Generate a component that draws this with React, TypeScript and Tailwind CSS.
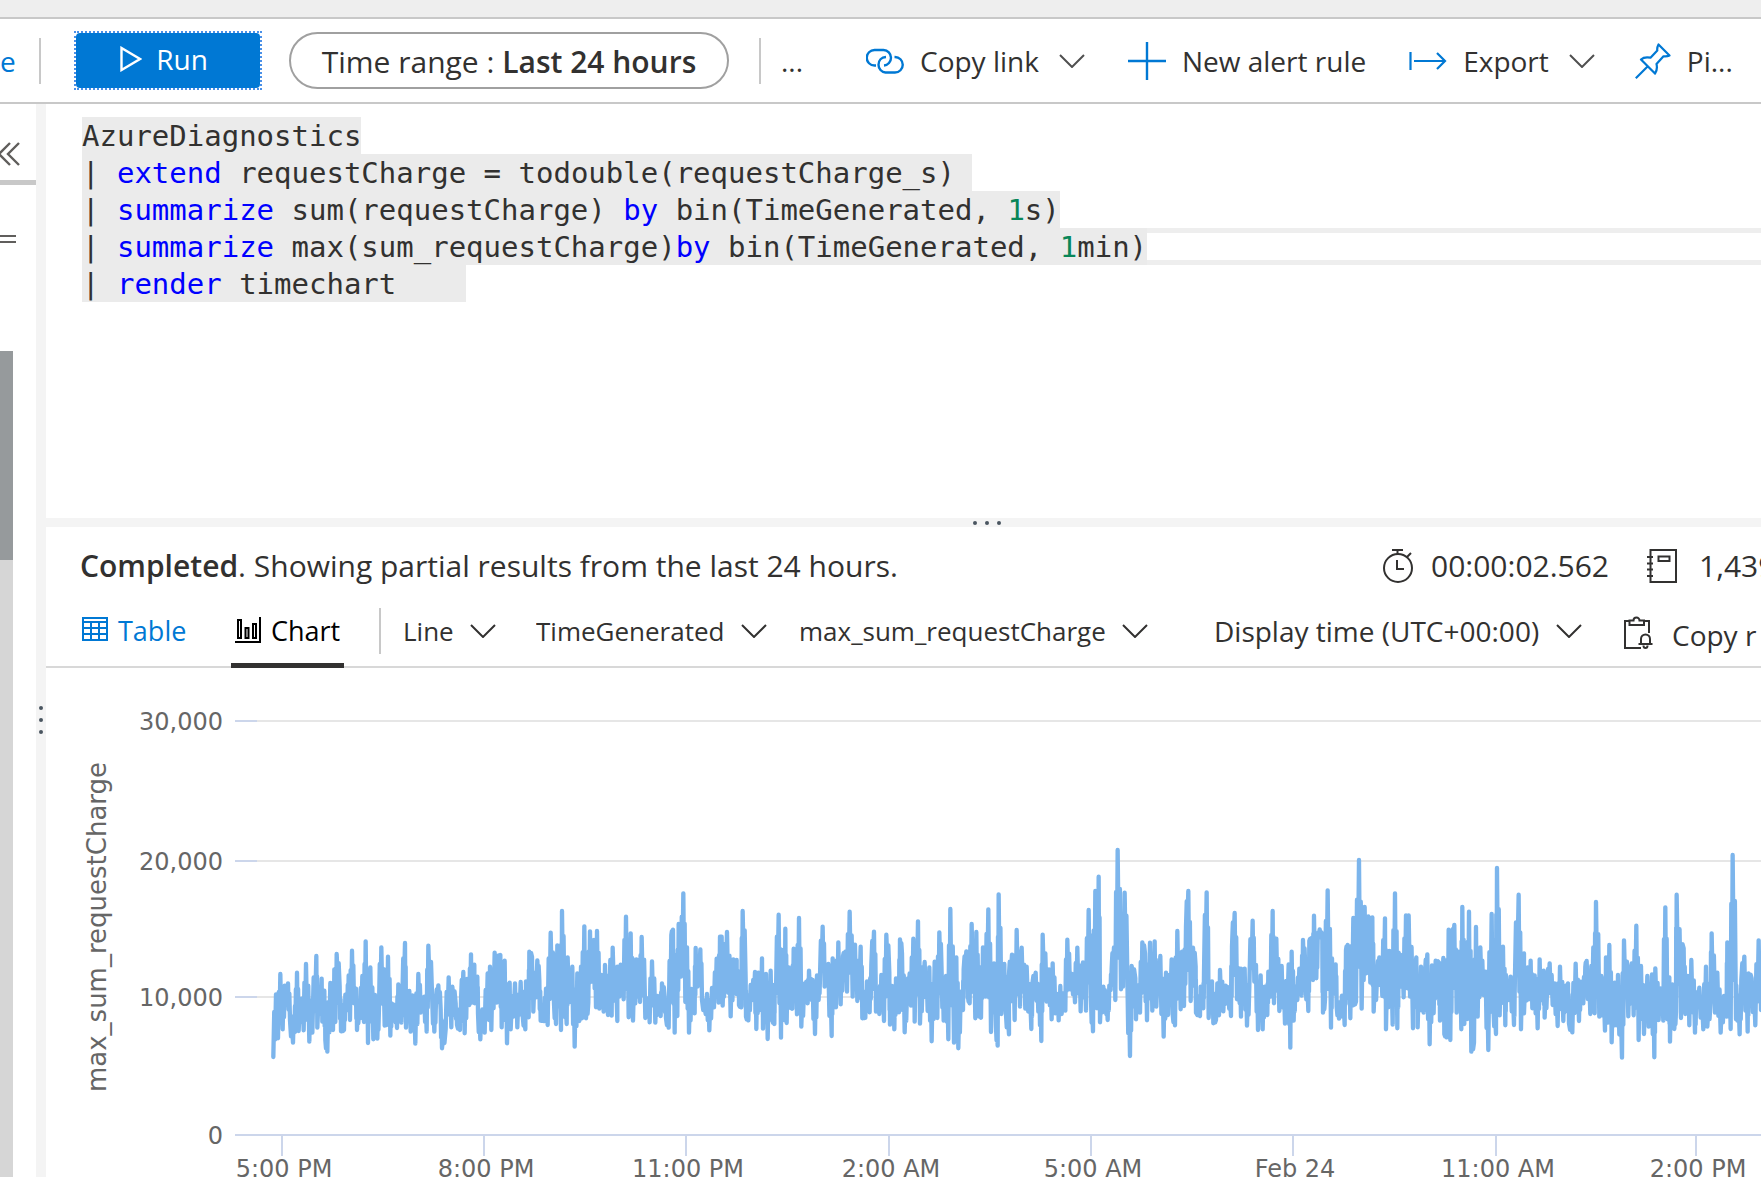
import type { ReactNode } from 'react';

const ChevronDown = ({ className = '' }: { className?: string }) => (
	<svg
		viewBox="0 0 26 14"
		className={`h-3.5 w-[26px] shrink-0 ${className}`}
		fill="none"
		stroke="currentColor"
		strokeWidth="2">
		<path d="M1 1l12 12L25 1" />
	</svg>
);

const LinkIcon = () => (
	<svg
		viewBox="0 0 38 28"
		className="h-7 w-[38px] shrink-0 text-[#0078d4]"
		fill="none"
		stroke="currentColor"
		strokeWidth="2.4">
		<path d="M10 18.500H8.500a7.750 7.750 0 0 1 0-15.500H17.500a7.750 7.750 0 0 1 7.500 7.750c0 4-3 7.500-7 7.750" />
		<path d="M28.500 10H29a7.750 7.750 0 0 1 0 15.500h-9.500a7.750 7.750 0 0 1-7-7.750c0-4.200 3-7.500 7.500-7.750" />
	</svg>
);

const PlusIcon = () => (
	<svg
		viewBox="0 0 38 38"
		className="size-[38px] shrink-0 text-[#0078d4]"
		fill="none"
		stroke="currentColor"
		strokeWidth="2.4">
		<path d="M19 0v38M0 19h38" />
	</svg>
);

const ExportIcon = () => (
	<svg
		viewBox="0 0 38 18"
		className="h-[18px] w-[38px] shrink-0 text-[#0078d4]"
		fill="none"
		stroke="currentColor"
		strokeWidth="2.2">
		<path d="M1.500 0v18M5 9h31M28 1l8 8-8 8" />
	</svg>
);

const PinIcon = () => (
	<svg
		viewBox="0 0 36 36"
		className="size-9 shrink-0 text-[#0078d4]"
		fill="none"
		stroke="currentColor"
		strokeWidth="2.200"
		strokeLinejoin="round">
		<path d="M23.500 1.500l11 11c-2 1-4.300 1-6 .8l-7 7.700c.8 3.500.5 6.700-1.500 9.500L6 16.500c2.500-2.300 5.800-2.600 9.500-1.800l6.800-7.200c-.3-2 .1-4 1.200-6zM12.800 23.200L.8 35.200" />
	</svg>
);

const PlayIcon = () => (
	<svg
		viewBox="0 0 22 26"
		className="h-[26px] w-[22px]"
		fill="none"
		stroke="currentColor"
		strokeWidth="2.400">
		<path d="M1.500 2v22L20 13z" />
	</svg>
);

const CollapseIcon = () => (
	<svg
		viewBox="0 0 20 24"
		className="h-6 w-5"
		fill="none"
		stroke="currentColor"
		strokeWidth="2.400">
		<path d="M10 1L-1 12l11 11M19 1L8 12l11 11" />
	</svg>
);

const StopwatchIcon = () => (
	<svg
		viewBox="0 0 30 34"
		className="h-[34px] w-[30px] shrink-0"
		fill="none"
		stroke="currentColor"
		strokeWidth="2">
		<circle cx="15" cy="19" r="14" />
		<path d="M9 1h11M14.500 1v4M14 11v9h7M24 8l4-4" />
	</svg>
);

const NotebookIcon = () => (
	<svg
		viewBox="0 0 30 34"
		className="h-[34px] w-[30px] shrink-0"
		fill="none"
		stroke="currentColor"
		strokeWidth="2">
		<path d="M3.500 1H29v32H3.500zM0 8h6M0 14.500h6M0 20.500h6M0 27h6M11.500 7.500h11v4.500h-11z" />
	</svg>
);

const TableIcon = () => (
	<svg
		viewBox="0 0 26 24"
		className="mb-1 h-6 w-[26px]"
		fill="none"
		stroke="currentColor"
		strokeWidth="2">
		<path d="M1 1h24v22H1zM1 5h24M1 11h24M1 17h24M9 5v18M17 5v18" />
	</svg>
);

const ChartIcon = () => (
	<svg
		viewBox="0 0 26 26"
		className="mb-1 size-[26px]"
		fill="none"
		stroke="currentColor"
		strokeWidth="2">
		<path d="M0 25h26M3 3h3v18H3zM10.500 11h3v10h-3zM18 7h3v14h-3zM25 0v25" />
	</svg>
);

const ClipboardIcon = () => (
	<svg
		viewBox="0 0 30 34"
		className="mb-1 h-[34px] w-[30px] shrink-0"
		fill="none"
		stroke="currentColor"
		strokeWidth="2">
		<path d="M5 5H1v27h16M20 5h5v12M5.500 9V4.500H9.500a3 3 0 0 1 6 0h4.500V9z" />
		<path d="M14.500 28h14M17 28v-5a4.500 4.500 0 0 1 9 0v5M19.500 29.500a2 2.500 0 0 0 4 0" />
	</svg>
);

const Separator = () => <div className="h-[46px] w-0.5 shrink-0 bg-[#c8c8c8]" />;

const ToolbarButton = ({
	icon,
	label,
	menu,
	className = ''
}: {
	icon?: ReactNode;
	label: string;
	menu?: boolean;
	className?: string;
}) => (
	<button className={`flex shrink-0 items-center gap-4 ${className}`}>
		{icon}
		<span className="whitespace-nowrap">{label}</span>
		{menu && <ChevronDown className="ml-1 text-[#505050]" />}
	</button>
);

const Toolbar = () => (
	<header className="flex h-[85px] shrink-0 items-center overflow-hidden border-b-2 border-[#c8c8c8] bg-white text-[28px]">
		<a href="#scope" className="w-[13px] shrink-0 text-[#0078d4]">
			e
		</a>
		<div className="w-[26px] shrink-0" />
		<Separator />
		<button className="ml-[33px] h-[59px] w-[188px] shrink-0 border-2 border-dotted border-[#4a90e8]">
			<span className="flex h-full items-center justify-center gap-3.5 rounded bg-[#0078d4] pr-2 pb-1 text-white">
				<PlayIcon />
				Run
			</span>
		</button>
		<button className="ml-[27px] h-[57px] w-[440px] shrink-0 rounded-full border-2 border-[#a0a0a0] pt-0.5 text-[30px] whitespace-nowrap">
			Time range : <span className="font-semibold">Last 24 hours</span>
		</button>
		<div className="w-[30px] shrink-0" />
		<Separator />
		<button className="ml-5 w-[85px] shrink-0 text-left">...</button>
		<ToolbarButton icon={<LinkIcon />} label="Copy link" menu />
		<ToolbarButton icon={<PlusIcon />} label="New alert rule" className="ml-[43px]" />
		<ToolbarButton icon={<ExportIcon />} label="Export" menu className="ml-[43px]" />
		<ToolbarButton icon={<PinIcon />} label="Pi..." className="ml-10" />
	</header>
);

const Sidebar = () => (
	<aside className="w-9 shrink-0 bg-white">
		<div className="flex h-[81px] items-start border-b-[5px] border-[#c8c8c8] pt-[38px] text-[#605e5c]">
			<button aria-label="Collapse">
				<CollapseIcon />
			</button>
		</div>
		<div className="mt-[50px] h-2 w-4 border-y-2 border-[#605e5c]" />
		<div className="mt-[108px] h-[826px] w-[13px] bg-[#d6d6d6]">
			<div className="h-[209px] bg-[#969a9c]" />
		</div>
	</aside>
);

const Dots = ({ vertical }: { vertical?: boolean }) => (
	<div className={`flex ${vertical ? 'flex-col gap-2' : 'gap-2'}`}>
		<i className="size-1 rounded-full bg-[#4a5560]" />
		<i className="size-1 rounded-full bg-[#4a5560]" />
		<i className="size-1 rounded-full bg-[#4a5560]" />
	</div>
);

const Keyword = ({ children }: { children: ReactNode }) => (
	<span className="text-[#0000ff]">{children}</span>
);

const Num = ({ children }: { children: ReactNode }) => (
	<span className="text-[#098658]">{children}</span>
);

const CodeLine = ({ children, active }: { children: ReactNode; active?: boolean }) => (
	<div className="flex h-[37px]">
		<span className="shrink-0 bg-[#ebebeb]">{children}</span>
		{active && <span className="grow border-y-[5px] border-[#eeeeee]" />}
	</div>
);

const Editor = () => (
	<section className="h-[414px] shrink-0 overflow-hidden bg-white pt-[13px] pl-9 font-['DejaVu_Sans_Mono',monospace] text-[29px] leading-[38px] whitespace-pre">
		<CodeLine>AzureDiagnostics</CodeLine>
		<CodeLine>
			{'| '}
			<Keyword>extend</Keyword>
			{' requestCharge = todouble(requestCharge_s) '}
		</CodeLine>
		<CodeLine>
			{'| '}
			<Keyword>summarize</Keyword>
			{' sum(requestCharge) '}
			<Keyword>by</Keyword>
			{' bin(TimeGenerated, '}
			<Num>1</Num>s)
		</CodeLine>
		<CodeLine active>
			{'| '}
			<Keyword>summarize</Keyword>
			{' max(sum_requestCharge)'}
			<Keyword>by</Keyword>
			{' bin(TimeGenerated, '}
			<Num>1</Num>min)
		</CodeLine>
		<CodeLine>
			{'| '}
			<Keyword>render</Keyword>
			{' timechart    '}
		</CodeLine>
	</section>
);

const Dropdown = ({
	label,
	value,
	className = ''
}: {
	label: string;
	value: string;
	className?: string;
}) => (
	<label className={`flex shrink-0 items-center gap-4 ${className}`}>
		<select aria-label={label} className="appearance-none bg-transparent">
			<option>{value}</option>
		</select>
		<ChevronDown />
	</label>
);

const ResultsBar = () => (
	<>
		<div className="flex h-[77px] shrink-0 items-center pl-[34px] text-[30px] whitespace-nowrap">
			<p className="w-[1303px] shrink-0">
				<span className="font-semibold">Completed</span>. Showing partial results from the
				last 24 hours.
			</p>
			<div className="flex w-[264px] shrink-0 items-center gap-[18px]">
				<StopwatchIcon />
				00:00:02.562
			</div>
			<div className="flex items-center gap-[22px]">
				<NotebookIcon />
				1,439
			</div>
		</div>
		<div className="flex h-16 shrink-0 items-center border-b-2 border-[#d8d8d8] pb-2 pl-9 text-[27px] whitespace-nowrap">
			<button className="flex w-[149px] shrink-0 items-center gap-2.5 text-[#0078d4]">
				<TableIcon />
				Table
			</button>
			<button className="flex h-16 w-[113px] shrink-0 items-center justify-center gap-2.5 self-start border-b-[5px] border-[#323130] pb-1 text-black">
				<ChartIcon />
				Chart
			</button>
			<div className="w-[35px] shrink-0" />
			<Separator />
			<Dropdown label="Chart type" value="Line" className="ml-[22px] text-[26px]" />
			<Dropdown label="X axis" value="TimeGenerated" className="ml-10 text-[26px]" />
			<Dropdown label="Y axis" value="max_sum_requestCharge" className="ml-8 text-[26px]" />
			<Dropdown
				label="Time zone"
				value="Display time (UTC+00:00)"
				className="ml-[66px] text-[28px]"
			/>
			<button className="mt-2 ml-[42px] flex shrink-0 items-center gap-[18px] text-[28px]">
				<ClipboardIcon />
				Copy r
			</button>
		</div>
	</>
);

const yTicks = [
	{ y: 53, label: '30,000' },
	{ y: 193, label: '20,000' },
	{ y: 329, label: '10,000' },
	{ y: 467, label: '0' }
];

const xTicks = [
	{ x: 236, label: '5:00 PM' },
	{ x: 438, label: '8:00 PM' },
	{ x: 640, label: '11:00 PM' },
	{ x: 843, label: '2:00 AM' },
	{ x: 1045, label: '5:00 AM' },
	{ x: 1247, label: 'Feb 24' },
	{ x: 1450, label: '11:00 AM' },
	{ x: 1650, label: '2:00 PM' }
];

// samples on a grid of three units per pixel, one string per third of the day
const evening =
	'220,651 228,463 234,595 241,402 248,568 254,437 258,490 264,430 270,540 279,608 285,498 286,575 291,398 296,573 305,476 311,571 318,372 328,605 333,482 337,578 349,348 352,563 365,416 367,545 373,452 376,600 382,635 391,429 399,570 403,388 406,546 410,342 419,440 423,574 432,570 436,464 442,510 446,406 450,540 456,332 462,490 468,446 471,570 477,498 480,535 487,408 492,546 497,304 504,609 511,382 520,598 525,465 532,596 537,500 544,322 554,557 556,390 560,555 564,350 571,587 575,490 585,505 591,564 595,433 604,548 607,475 615,309 618,563 628,453 632,575 637,466 646,611 655,402 662,518 667,478 673,470 680,575 685,317 697,490 703,575 708,480 715,436 722,508 726,625 737,568 746,412 754,562 757,440 767,490 771,555 780,570 783,480 790,396 794,580 801,417 808,495 813,343 816,488 823,374 824,490 832,410 834,520 841,598 847,508 854,578 863,400 867,540 870,380 874,570 884,338 890,488 893,350 901,345 905,562 914,362 921,610 929,428 932,568 945,430 952,562 962,426 968,527 976,568 978,424 986,532 988,335 996,350 1000,515 1012,361 1018,420 1022,542 1033,543 1038,446 1043,555 1052,278 1062,490 1068,552 1072,316 1083,570 1086,213 1093,480 1100,552 1103,352 1110,486 1117,380 1124,620 1132,400 1138,543 1143,380 1146,535 1153,259 1158,535 1165,488 1170,274 1175,425 1182,300 1188,502 1191,273 1198,506 1204,405 1211,515 1215,375 1224,525 1231,360 1235,527 1238,323 1252,543 1252,380 1258,470 1262,374 1271,478 1278,230 1286,532 1292,280 1299,542 1309,358 1313,470 1316,360 1320,486 1325,291 1336,534 1343,475 1349,547 1356,364 1366,548 1372,468 1382,528 1386,430 1394,470 1398,535 1406,563 1414,285 1419,269 1424,578 1427,345 1432,528 1436,252 1443,410 1450,160 1456,486 1461,322 1467,578 1474,447 1484,520 1487,324 1492,440 1501,328 1506,480 1517,522 1521,462 1528,571 1536,444 1542,502 1550,356 1556,488 1560,290';

const night =
	'5,290 8,497 14,400 21,276 32,529 40,358 44,425 50,360 50,462 57,395 57,495 64,502 68,213 77,420 78,530 85,541 92,435 97,480 105,396 109,567 115,398 120,510 126,355 129,566 138,402 143,597 152,392 157,540 163,552 164,435 168,460 176,224 183,593 186,330 192,540 196,266 200,549 206,382 210,500 217,506 221,326 231,523 237,234 244,560 252,445 259,425 263,490 267,392 275,480 278,420 285,582 291,406 296,480 300,410 308,260 314,440 325,372 335,588 338,355 348,502 355,307 362,493 369,348 376,335 381,455 389,215 398,470 405,314 412,483 422,320 427,535 436,533 441,424 449,517 454,375 462,275 468,515 475,460 478,522 484,405 492,543 499,284 508,398 510,554 516,438 523,568 528,415 537,517 540,298 546,340 554,577 561,455 569,400 573,497 580,296 584,545 594,244 600,551 608,420 614,366 623,513 628,382 635,604 644,365 652,534 658,277 665,400 671,542 678,408 685,598 691,207 702,608 709,352 715,625 722,455 729,510 731,388 739,334 744,470 749,490 755,252 766,535 769,276 775,520 783,533 789,322 797,470 805,208 813,576 822,370 828,560 833,617 836,163 844,522 853,372 857,508 867,583 866,420 876,344 884,540 890,270 900,500 905,323 916,506 920,380 934,567 937,432 947,398 955,515 958,435 964,603 968,284 980,485 987,388 995,538 998,370 1006,520 1011,462 1016,541 1021,438 1025,522 1029,460 1036,512 1042,299 1050,448 1056,402 1065,487 1072,323 1082,514 1089,367 1098,512 1106,210 1113,480 1119,574 1126,153 1131,505 1136,110 1140,547 1150,440 1157,478 1163,540 1168,437 1172,450 1175,385 1182,322 1186,480 1193,30 1203,448 1204,240 1209,440 1214,158 1222,405 1230,648 1235,378 1246,415 1248,538 1254,436 1260,518 1267,307 1275,340 1281,541 1290,308 1297,512 1304,304 1309,500 1321,348 1331,590 1338,398 1344,525 1355,358 1358,522 1365,556 1372,273 1382,508 1386,335 1392,498 1398,262 1405,153 1412,483 1419,323 1427,380 1428,518 1440,528 1442,440 1450,505 1452,400 1460,157 1466,534 1476,424 1480,550 1488,540 1492,430 1497,526 1500,390 1510,514 1517,437 1525,450 1533,528 1536,320 1544,219 1551,478 1557,385';

const day =
	'3,530 3,386 10,480 14,386 21,557 28,440 38,242 43,425 48,375 54,570 62,406 68,568 74,440 82,525 85,395 92,470 98,213 102,490 109,296 118,513 125,378 135,551 146,373 151,623 155,335 161,542 166,440 172,480 178,386 185,467 189,300 196,390 205,513 208,303 214,295 219,420 222,227 229,415 233,300 239,268 247,300 249,518 255,480 263,151 273,563 276,355 281,460 287,373 290,500 297,536 306,467 314,555 318,330 323,315 331,535 340,234 340,496 348,485 357,60 365,506 374,201 379,400 385,229 391,428 397,232 401,515 412,390 418,352 427,468 435,235 438,568 448,333 458,554 465,160 472,565 476,338 484,360 491,472 498,226 502,445 506,226 519,565 518,402 529,352 533,562 543,380 551,518 555,400 562,343 569,613 576,376 581,520 587,362 597,368 600,542 610,354 613,582 620,592 626,269 631,600 636,300 643,255 650,518 656,335 664,568 667,201 673,552 677,320 682,537 687,215 694,635 702,608 708,261 713,530 721,322 730,465 737,395 745,630 755,222 760,500 768,582 771,84 779,526 789,320 796,556 798,405 806,480 812,410 822,555 824,460 836,164 843,568 852,340 852,520 863,382 866,478 872,362 877,505 884,406 893,565 899,358 904,480 911,392 914,533 922,430 929,370 938,495 944,430 953,558 960,380 970,543 974,455 984,430 987,550 997,577 1007,371 1017,543 1022,425 1030,490 1036,380 1040,363 1051,522 1060,322 1064,520 1068,186 1078,530 1084,408 1095,572 1098,352 1104,548 1108,315 1115,607 1124,428 1129,556 1134,405 1146,653 1152,301 1165,529 1170,400 1175,370 1181,526 1189,257 1196,600 1203,378 1212,582 1222,408 1226,560 1236,403 1243,652 1246,385 1256,540 1262,445 1270,542 1276,202 1282,538 1288,412 1290,605 1297,433 1303,567 1308,515 1310,164 1323,534 1321,308 1331,325 1336,522 1343,408 1348,556 1354,360 1365,578 1368,490 1378,443 1390,568 1398,380 1402,560 1412,480 1415,280 1425,518 1432,398 1442,578 1452,468 1460,530 1462,307 1472,567 1478,45 1488,538 1489,436 1499,583 1504,420 1513,350 1523,575 1526,400 1535,415 1546,556 1556,301 1563,510';

const parts = [
	{ start: 0, samples: evening },
	{ start: 1560, samples: night },
	{ start: 3120, samples: day }
];

const extremes = parts.flatMap(({ start, samples }) =>
	samples.split(' ').map((sample) => {
		const [x, y] = sample.split(',').map(Number);
		return { x: start + x, y };
	})
);

// the values swing back once between one extreme and the next
const points = extremes
	.flatMap((a, i) => {
		const b = extremes[i + 1];
		if (!b) return [a];
		const dx = (b.x - a.x) / 3;
		const dy = (b.y - a.y) * 0.72;
		return [a, { x: a.x + dx, y: a.y + dy }, { x: b.x - dx, y: b.y - dy }];
	})
	.map(({ x, y }) => `${x.toFixed(1)},${y.toFixed(1)}`)
	.join(' ');

const TimeChart = () => (
	<svg
		role="img"
		aria-label="max_sum_requestCharge over time"
		className="block h-[509px] w-full overflow-hidden font-['DejaVu_Sans',sans-serif] text-2xl"
		fill="#666666">
		{yTicks.map(({ y, label }) => (
			<g key={label}>
				<text x="177" y={y + 9} textAnchor="end">
					{label}
				</text>
				<rect x="189" y={y - 1} width="100%" height="2" fill={label === '0' ? '#ccd6eb' : '#e6e6e6'} />
				<rect x="189" y={y - 1} width="22" height="2" fill="#ccd6eb" />
			</g>
		))}
		{xTicks.map(({ x, label }) => (
			<g key={label}>
				<rect x={x - 1} y="467" width="2" height="21" fill="#ccd6eb" />
				<text x={x + 2} y="509" textAnchor="middle">
					{label}
				</text>
			</g>
		))}
		<text
			transform="translate(60 259) rotate(-90)"
			textAnchor="middle"
			className="text-[26px]">
			max_sum_requestCharge
		</text>
		<polyline
			points={points}
			transform="translate(154 172) scale(.33333)"
			fill="none"
			stroke="#7cb5ec"
			strokeWidth="13"
			strokeLinecap="round"
			strokeLinejoin="round"
		/>
	</svg>
);

const App = () => {
	return (
		<div className="flex min-h-screen flex-col overflow-hidden bg-white font-['Open_Sans',sans-serif] text-[#323130]">
			<div className="h-[19px] shrink-0 border-b-2 border-[#c8c8c8] bg-[#eeeeee]" />
			<Toolbar />
			<div className="flex grow">
				<Sidebar />
				<div className="flex w-2.5 shrink-0 justify-center bg-[#f4f4f4] pt-[602px]">
					<Dots vertical />
				</div>
				<main className="flex min-w-0 grow flex-col overflow-hidden">
					<Editor />
					<div className="flex h-[9px] shrink-0 items-center justify-center bg-[#f4f4f4] pl-[167px]">
						<Dots />
					</div>
					<ResultsBar />
					<TimeChart />
				</main>
			</div>
		</div>
	);
};

export default App;
